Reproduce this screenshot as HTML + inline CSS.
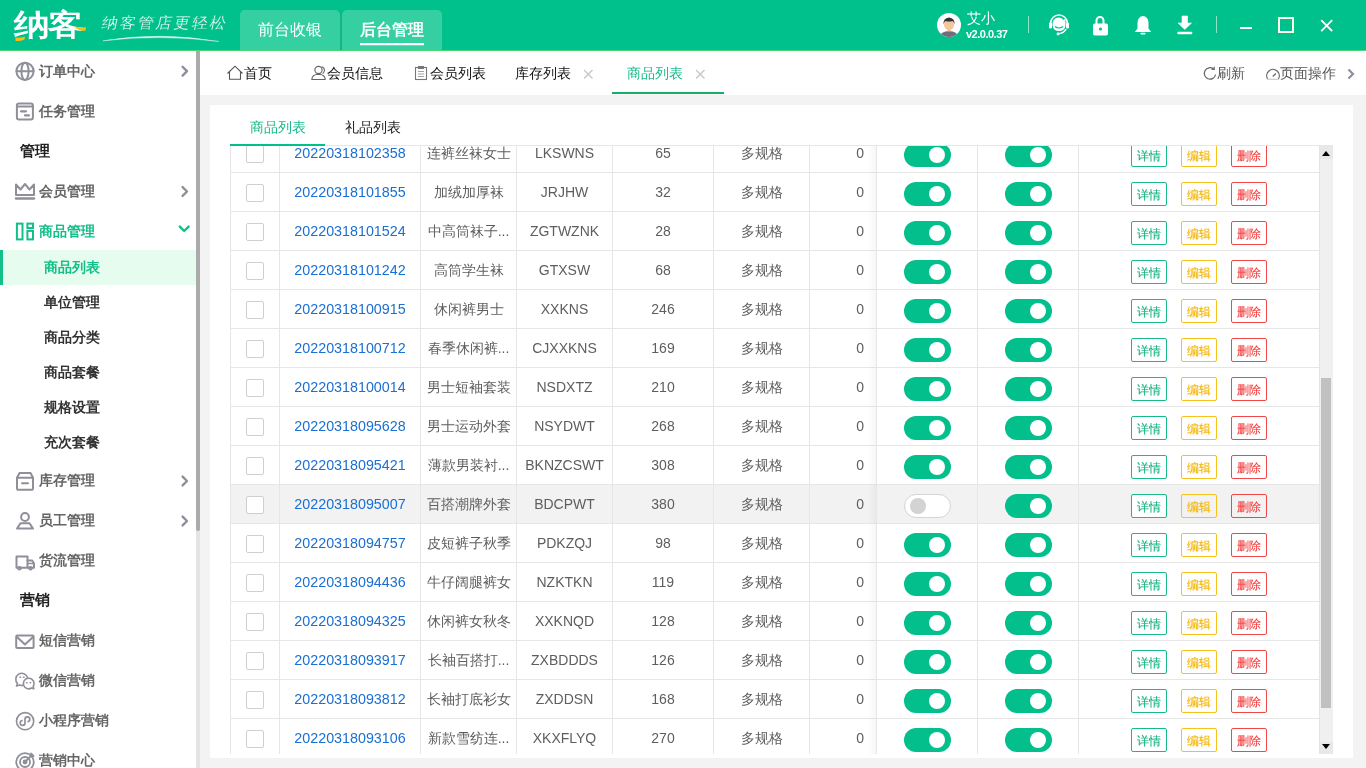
<!DOCTYPE html>
<html><head><meta charset="utf-8">
<style>
*{margin:0;padding:0;box-sizing:border-box}
html,body{width:1366px;height:768px;overflow:hidden;background:#f3f3f3;will-change:transform;font-family:"Liberation Sans",sans-serif;position:relative}
.a{position:absolute}
#hdr{position:absolute;left:0;top:0;width:1366px;height:51px;background:#00c18b;border-bottom:1px solid #4ad77a}
#logo{position:absolute;left:14px;top:9px;font-size:36px;font-weight:bold;color:#fff;letter-spacing:-1px;line-height:40px;transform:scale(0.98,0.82);transform-origin:0 0}
#slogan{position:absolute;left:102px;top:12px;font-size:16px;color:#fff;line-height:22px;letter-spacing:2px;transform:skewX(-12deg) scaleY(0.95);font-weight:300;-webkit-text-stroke:0.22px #02bf8b}
.htab{position:absolute;top:10px;height:40px;width:100px;background:#35d0a2;border-radius:5px 5px 0 0;color:#fff;font-size:16px;line-height:40px;text-align:center}
#side{position:absolute;left:0;top:51px;width:196px;height:717px;background:#fff;overflow:hidden}
#sscroll{position:absolute;left:196px;top:51px;width:4px;height:717px;background:#e4e4e4}
#sthumb{position:absolute;left:196px;top:51px;width:4px;height:480px;background:#ababab;border-radius:0 0 2px 2px}
#tabbar{position:absolute;left:200px;top:51px;width:1166px;height:44px;background:#fff}
#card{position:absolute;left:210px;top:105px;width:1143px;height:653px;background:#fff}
.tb{position:absolute;top:0;height:44px;line-height:44px;font-size:14px;color:#111}
#tbl{position:absolute;left:230px;top:145px;width:1103px;height:609px;overflow:hidden;background:#fff;border-top:1px solid #e6e6e6}
.row{position:absolute;left:0;width:1089px;height:39px;border-bottom:1px solid #e6e6e6;border-left:1px solid #e6e6e6;background:#fff}
.row.hov{background:#f2f2f2}
.c{position:absolute;top:0;height:38px;line-height:38px;text-align:center;font-size:14px;color:#5e5e5e;border-right:1px solid #e6e6e6;white-space:nowrap;overflow:hidden}
.cb{left:0;width:49px}
.code{left:49px;width:141px;color:#1a6fd3;font-size:14.3px}
.nm{left:190px;width:96px}
.py{left:286px;width:96px}
.st{left:382px;width:101px}
.spec{left:483px;width:96px}
.z{left:579px;width:80px;text-align:right;padding-right:26px;border-right:none}
.chk{position:absolute;left:15px;top:11px;width:18px;height:18px;border:1px solid #cfcfcf;border-radius:2px;background:#fff}
#fx{position:absolute;left:646px;top:0;width:443px;height:609px}
#fxsh{position:absolute;left:-8px;top:0;width:8px;height:609px;background:linear-gradient(to right,rgba(0,0,0,0),rgba(0,0,0,0.035))}
.frow{position:absolute;left:0;width:443px;height:39px;border-bottom:1px solid #e6e6e6;border-left:1px solid #e6e6e6;background:#fff}
.frow.hov{background:#f2f2f2}
.f1,.f2,.f3{position:absolute;top:0;height:38px;border-right:1px solid #e6e6e6}
.f1{left:0;width:101px}
.f2{left:101px;width:101px}
.f3{left:202px;width:241px;border-right:none}
.tg{position:absolute;left:27px;top:9px;width:47px;height:24px;border-radius:12px}
.tg.on{background:#02bf8b}
.tg.on:after{content:"";position:absolute;right:6px;top:4px;width:16px;height:16px;border-radius:50%;background:#fff}
.tg.off{background:#fff;border:1px solid #d4d4d4}
.tg.off:after{content:"";position:absolute;left:5px;top:3px;width:16px;height:16px;border-radius:50%;background:#d3d3d3}
.bt{position:absolute;top:9px;width:36px;height:24px;border:1px solid;border-radius:2px;font-weight:normal;font-size:12px;line-height:23px;padding-top:1px;text-align:center;-webkit-text-stroke:0.12px currentColor}
.bt.g{left:52px;color:#12b17f;border-color:#19b98a;background:#fff}
.bt.y{left:102px;color:#f5b400;border-color:#f8c21c}
.bt.r{left:152px;color:#f43a3a;border-color:#f04848}
#sb{position:absolute;left:1089px;top:0;width:14px;height:609px;background:#f0f0f0;border-left:1px solid #e4e4e4}
#sbbt1{position:absolute;left:0;top:0;width:13px;height:13px;background:#e8e8e8}
#sbbt2{position:absolute;left:0;top:596px;width:13px;height:13px;background:#e8e8e8}
#sbup{position:absolute;left:2px;top:5px;width:0;height:0;border-left:4px solid transparent;border-right:4px solid transparent;border-bottom:5px solid #000}
#thumb{position:absolute;left:1px;top:232px;width:10px;height:330px;background:#c1c1c1}
#sbdn{position:absolute;left:2px;top:598px;width:0;height:0;border-left:4px solid transparent;border-right:4px solid transparent;border-top:5px solid #000}
.si{position:absolute;left:39px;height:40px;line-height:40px;font-size:14px;font-weight:bold;color:#666;white-space:nowrap}
.si.act{color:#12bf88}
.sh{position:absolute;left:20px;height:40px;line-height:40px;font-size:15px;font-weight:bold;color:#222}
.ss{position:absolute;left:44px;height:35px;line-height:35px;font-size:14px;font-weight:bold;color:#333}
.sact{position:absolute;left:0;top:199px;width:196px;height:35px;background:#e6fcee;border-left:3px solid #12bf88}
</style></head><body>
<div id="hdr">
 <div id="logo">纳客</div>
 <svg class="a" style="left:0;top:0" width="240" height="50" viewBox="0 0 240 50">
  <path d="M15.5 37.5Q20 38.5 25 36.5L24.5 39.5Q20 41.5 15.5 41Z" fill="#fbbf14"/>
  <path d="M74.5 26Q80 28.5 86 27L85.5 30.5Q80 31.5 75.5 28Z" fill="#fbbf14"/>
  <path d="M103 40.8Q160 31.5 219 41.5Q160 34 103 40.8Z" fill="#fff" stroke="#fff" stroke-width="0.4" opacity="0.9"/>
 </svg>
 <div id="slogan">纳客管店更轻松</div>
 <div class="htab" style="left:240px">前台收银</div>
 <div class="htab" style="left:342px;font-weight:bold">后台管理<i style="position:absolute;left:18px;top:33px;width:64px;height:2px;background:#fff;box-shadow:0 0.5px 0 rgba(255,255,255,0.5)"></i></div>
 <i class="a" style="left:340px;top:12px;width:2px;height:38px;background:#16b384"></i>
 <svg class="a" style="left:936px;top:12px" width="26" height="26" viewBox="0 0 26 26">
  <defs><clipPath id="av"><circle cx="13" cy="13" r="12"/></clipPath></defs>
  <circle cx="13" cy="13" r="12" fill="#fff"/>
  <g clip-path="url(#av)">
   <path d="M3 26Q4 19.5 13 19Q22 19.5 23 26Z" fill="#6f6f7b"/>
   <rect x="11.3" y="15.5" width="3.4" height="4" fill="#efb88e"/>
   <ellipse cx="13" cy="12.5" rx="5" ry="5.6" fill="#f5c59c"/>
   <path d="M7.6 12.5Q7 6 13 5.5Q19 6 18.4 12.5Q18 9.5 16.5 9Q13 10 9.5 9Q8 9.5 7.6 12.5Z" fill="#333"/>
  </g>
 </svg>
 <div class="a" style="left:967px;top:9px;font-size:14px;line-height:18px;color:#fff">艾小</div>
 <div class="a" style="left:966px;top:28px;font-size:11px;line-height:13px;color:#fff;font-weight:bold;letter-spacing:-0.5px">v2.0.0.37</div>
 <i class="a" style="left:1028px;top:16px;width:1px;height:17px;background:#8fe3c6"></i>
 <i class="a" style="left:1216px;top:16px;width:1px;height:17px;background:#8fe3c6"></i>
 <svg class="a" style="left:1040px;top:8px" width="170" height="34" viewBox="1040 8 170 34">
  <!-- headset -->
  <g fill="none" stroke="#fff" stroke-width="1.6">
   <path d="M1050.5 25.5V23.5A8.5 8.5 0 0 1 1067.5 23.5V25.5"/>
   <path d="M1066 29Q1064 33.5 1058 33.8"/>
  </g>
  <rect x="1049" y="22.5" width="3" height="6" rx="1.2" fill="#fff"/>
  <rect x="1066" y="22.5" width="3" height="6" rx="1.2" fill="#fff"/>
  <path d="M1052.5 25Q1052.5 18 1058 17.5Q1062 17.5 1063.5 20L1065.5 18.5L1065.5 25Q1065 31 1059 31Q1053 31 1052.5 25Z" fill="#fff"/>
  <path d="M1055 26.5Q1059 29.5 1063 26.5" fill="none" stroke="#02bf8b" stroke-width="1.2"/>
  <circle cx="1058" cy="34" r="1.4" fill="#fff"/>
  <!-- lock -->
  <path d="M1096.5 24V20.5A3.5 3.5 0 0 1 1103.5 20.5V24" fill="none" stroke="#fff" stroke-width="2"/>
  <rect x="1093" y="23.5" width="15" height="12" rx="1.8" fill="#fff"/>
  <circle cx="1100.5" cy="29" r="1.6" fill="#02bf8b"/>
  <!-- bell -->
  <path d="M1143 16Q1148 16.5 1148.5 22.5V28.5L1151.2 32H1134.8L1137.5 28.5V22.5Q1138 16.5 1143 16Z" fill="#fff"/>
  <rect x="1140.5" y="32.8" width="5" height="1.8" rx="0.8" fill="#fff"/>
  <!-- download -->
  <path d="M1182 16H1187.5V23H1191.5L1184.75 29.5L1178 23H1182Z" fill="#fff" stroke="#fff" stroke-width="0.6" stroke-linejoin="round"/>
  <rect x="1177.3" y="31.8" width="15" height="2.5" rx="1" fill="#fff"/>
 </svg>
 <i class="a" style="left:1240px;top:27px;width:12px;height:2px;background:#fff"></i>
 <i class="a" style="left:1278px;top:17px;width:16px;height:16px;border:2px solid #fdfde6"></i>
 <svg class="a" style="left:1320px;top:19px" width="14" height="14" viewBox="0 0 14 14"><path d="M1.2 1.2L12.2 12.2M12.2 1.2L1.2 12.2" stroke="#fff" stroke-width="1.8"/></svg>
</div>
<div id="side">
<svg class="a" style="left:0;top:0" width="196" height="717" viewBox="0 51 196 717" fill="none" stroke="#8f8f9a" stroke-width="2" stroke-linecap="round" stroke-linejoin="round">
 <!-- globe -->
 <circle cx="25" cy="71.3" r="8.6"/>
 <ellipse cx="25" cy="71.3" rx="3.6" ry="8.6"/>
 <path d="M16.6 71.3H33.4"/>
 <!-- task -->
 <rect x="16.9" y="103.4" width="16" height="16" rx="2"/>
 <path d="M17 106.5H33"/>
 <path d="M21 111.3H26M25 115.3H29" stroke-width="2.2"/>
 <!-- crown -->
 <path d="M16 184.5V195H34V184.5L29.5 189.5L25 184L20.5 189.5Z"/>
 <path d="M16 198.5H34" stroke-width="2.4"/>
 <!-- goods green -->
 <g stroke="#12bf88" stroke-linecap="butt" stroke-linejoin="miter">
 <rect x="16.9" y="223.6" width="5.6" height="15.8"/>
 <rect x="27.4" y="223.6" width="5.6" height="4.4"/>
 <rect x="27.4" y="230.9" width="5.6" height="8.5"/>
 </g>
 <path d="M179.8 226.6L184.2 231L188.6 226.6" stroke="#12bf88" stroke-width="2.4"/>
 <!-- chevrons -->
 <g stroke-width="2.4">
 <path d="M182.6 66.8L187 71.2L182.6 75.6"/>
 <path d="M182.6 187.1L187 191.5L182.6 195.9"/>
 <path d="M182.6 476.6L187 481L182.6 485.4"/>
 <path d="M182.6 516.6L187 521L182.6 525.4"/>
 </g>
 <!-- warehouse -->
 <path d="M17 477.8H33V488.6a1.2 1.2 0 0 1 -1.2 1.2H18.2a1.2 1.2 0 0 1 -1.2 -1.2Z"/>
 <path d="M17 477.8L19.5 473H30.5L33 477.8"/>
 <path d="M22 483.3H28"/>
 <!-- person -->
 <circle cx="25" cy="517" r="3.9"/>
 <path d="M17 528.6L20.5 523.2H29.5L33 528.6Z"/>
 <!-- truck -->
 <path d="M16.5 567V556.5H27.5V567"/>
 <path d="M27.5 560.5H32.2L34 563.5V567.8H16.5"/>
 <path d="M28 563.5H34" stroke-width="1.6"/>
 <circle cx="19.5" cy="568.3" r="1.3" fill="#fff"/>
 <circle cx="30.5" cy="568.3" r="1.3" fill="#fff"/>
 <!-- envelope -->
 <rect x="16.2" y="635.6" width="17.4" height="12.3" rx="1"/>
 <path d="M17 637L25 644.5L33 637"/>
 <!-- wechat -->
 <path d="M27.5 677.5A6 6 0 1 0 17.5 683.5L16.5 686L19.5 685A6 6 0 0 0 22.8 685.4" stroke-width="1.6"/>
 <path d="M34 683.5A5.3 5.3 0 1 0 31.5 688L33.8 688.8L33.2 686.5A5.3 5.3 0 0 0 34 683.5Z" stroke-width="1.6"/>
 <path d="M20 677.2h.6M23.5 677.2h.6M26.5 682.8h.6M30 682.8h.6" stroke-width="1.4"/>
 <!-- mini program -->
 <circle cx="25.1" cy="721.2" r="8.6" stroke-width="1.6"/>
 <path d="M22.6 720.5A2.4 2.4 0 1 0 25 722.9V719.2A2.4 2.4 0 1 1 27.4 721.6" stroke-width="1.7" stroke-linecap="butt"/>
 <!-- target -->
 <circle cx="25" cy="762" r="8.8" stroke-width="1.8"/>
 <circle cx="25" cy="762" r="5" stroke-width="1.8"/>
 <circle cx="25" cy="762" r="1.4" fill="#8f8f9a"/>
 <path d="M25 762L32.5 754.5M31 753.5V756H33.5" stroke-width="1.8"/>
</svg>
<div class="si" style="top:0px">订单中心</div>
<div class="si" style="top:40px">任务管理</div>
<div class="sh" style="top:80px">管理</div>
<div class="si" style="top:120px">会员管理</div>
<div class="si act" style="top:160px">商品管理</div>
<div class="sact"></div>
<div class="ss" style="top:199px;color:#12bf88">商品列表</div>
<div class="ss" style="top:234px">单位管理</div>
<div class="ss" style="top:269px">商品分类</div>
<div class="ss" style="top:304px">商品套餐</div>
<div class="ss" style="top:339px">规格设置</div>
<div class="ss" style="top:374px">充次套餐</div>
<div class="si" style="top:409px">库存管理</div>
<div class="si" style="top:449px">员工管理</div>
<div class="si" style="top:489px">货流管理</div>
<div class="sh" style="top:529px">营销</div>
<div class="si" style="top:569px">短信营销</div>
<div class="si" style="top:609px">微信营销</div>
<div class="si" style="top:649px">小程序营销</div>
<div class="si" style="top:689px">营销中心</div>
</div>

<div id="sscroll"></div><div id="sthumb"></div>
<div id="tabbar">
 <div class="tb" style="left:44px">首页</div>
 <div class="tb" style="left:127px">会员信息</div>
 <div class="tb" style="left:230px">会员列表</div>
 <div class="tb" style="left:315px">库存列表</div>
 <div class="tb" style="left:427px;color:#19b98a">商品列表</div>
 <i class="a" style="left:412px;top:41px;width:112px;height:2px;background:#1aad66"></i>
 <div class="tb" style="left:1017px;color:#555">刷新</div>
 <div class="tb" style="left:1080px;color:#555">页面操作</div>
 <svg class="a" style="left:0;top:0" width="1166" height="44" viewBox="200 51 1166 44" fill="none" stroke-width="1.1">
  <path d="M227.5 73.5L235 66.2L242.5 73.5M229.5 71.5V79.2H240.5V71.5" stroke="#555"/>
  <circle cx="318.5" cy="70" r="3.6" stroke="#666"/>
  <path d="M311.8 79.5Q312 74.5 318.5 74.3Q325 74.5 325.2 79.5Z" stroke="#666"/>
  <path d="M321.5 66.8Q324.5 67.5 324.5 70.5Q324 73 322.5 73.5" stroke="#666"/>
  <rect x="415.5" y="67.5" width="11" height="12" stroke="#777"/>
  <path d="M418.5 66.5H423.5V68.5H418.5Z" stroke="#777"/>
  <path d="M418 71.5H424M418 74H424M418 76.5H424" stroke="#999" stroke-width="0.9"/>
  <path d="M584 70L592.5 78.5M592.5 70L584 78.5" stroke="#c4c4c4" stroke-width="1.2"/>
  <path d="M696 70L704.5 78.5M704.5 70L696 78.5" stroke="#c4c4c4" stroke-width="1.2"/>
  <path d="M1215.6 74.5A5.7 5.7 0 1 1 1213.6 69" stroke="#666" stroke-width="1.2"/>
  <path d="M1214.2 66.8V69.4H1211.6" stroke="#666" stroke-width="1.2"/>
  <path d="M1267.6 79A6.3 6.3 0 1 1 1278.4 79" stroke="#666" stroke-width="1.2"/>
  <path d="M1267 79.3H1279" stroke="#ccc" stroke-width="1.2"/>
  <path d="M1272.8 76.5L1275.8 73.5" stroke="#666" stroke-width="1.2"/>
  <path d="M1348.5 69.5L1353 74L1348.5 78.5" stroke="#8f8f9a" stroke-width="2.2"/>
 </svg>
</div>
<div id="card">
 <div class="a" style="left:40px;top:12px;font-size:14px;color:#19b98a;line-height:20px">商品列表</div>
 <div class="a" style="left:135px;top:12px;font-size:14px;color:#222;line-height:20px">礼品列表</div>
</div>
<div id="tbl">
<div class="row" style="top:-12px">
<div class="c cb"><i class="chk"></i></div>
<div class="c code">20220318102358</div>
<div class="c nm">连裤丝袜女士</div>
<div class="c py">LKSWNS</div>
<div class="c st">65</div>
<div class="c spec">多规格</div>
<div class="c z">0</div>
</div><div class="row" style="top:27px">
<div class="c cb"><i class="chk"></i></div>
<div class="c code">20220318101855</div>
<div class="c nm">加绒加厚袜</div>
<div class="c py">JRJHW</div>
<div class="c st">32</div>
<div class="c spec">多规格</div>
<div class="c z">0</div>
</div><div class="row" style="top:66px">
<div class="c cb"><i class="chk"></i></div>
<div class="c code">20220318101524</div>
<div class="c nm">中高筒袜子...</div>
<div class="c py">ZGTWZNK</div>
<div class="c st">28</div>
<div class="c spec">多规格</div>
<div class="c z">0</div>
</div><div class="row" style="top:105px">
<div class="c cb"><i class="chk"></i></div>
<div class="c code">20220318101242</div>
<div class="c nm">高筒学生袜</div>
<div class="c py">GTXSW</div>
<div class="c st">68</div>
<div class="c spec">多规格</div>
<div class="c z">0</div>
</div><div class="row" style="top:144px">
<div class="c cb"><i class="chk"></i></div>
<div class="c code">20220318100915</div>
<div class="c nm">休闲裤男士</div>
<div class="c py">XXKNS</div>
<div class="c st">246</div>
<div class="c spec">多规格</div>
<div class="c z">0</div>
</div><div class="row" style="top:183px">
<div class="c cb"><i class="chk"></i></div>
<div class="c code">20220318100712</div>
<div class="c nm">春季休闲裤...</div>
<div class="c py">CJXXKNS</div>
<div class="c st">169</div>
<div class="c spec">多规格</div>
<div class="c z">0</div>
</div><div class="row" style="top:222px">
<div class="c cb"><i class="chk"></i></div>
<div class="c code">20220318100014</div>
<div class="c nm">男士短袖套装</div>
<div class="c py">NSDXTZ</div>
<div class="c st">210</div>
<div class="c spec">多规格</div>
<div class="c z">0</div>
</div><div class="row" style="top:261px">
<div class="c cb"><i class="chk"></i></div>
<div class="c code">20220318095628</div>
<div class="c nm">男士运动外套</div>
<div class="c py">NSYDWT</div>
<div class="c st">268</div>
<div class="c spec">多规格</div>
<div class="c z">0</div>
</div><div class="row" style="top:300px">
<div class="c cb"><i class="chk"></i></div>
<div class="c code">20220318095421</div>
<div class="c nm">薄款男装衬...</div>
<div class="c py">BKNZCSWT</div>
<div class="c st">308</div>
<div class="c spec">多规格</div>
<div class="c z">0</div>
</div><div class="row hov" style="top:339px">
<div class="c cb"><i class="chk"></i></div>
<div class="c code">20220318095007</div>
<div class="c nm">百搭潮牌外套</div>
<div class="c py">BDCPWT</div>
<div class="c st">380</div>
<div class="c spec">多规格</div>
<div class="c z">0</div>
</div><div class="row" style="top:378px">
<div class="c cb"><i class="chk"></i></div>
<div class="c code">20220318094757</div>
<div class="c nm">皮短裤子秋季</div>
<div class="c py">PDKZQJ</div>
<div class="c st">98</div>
<div class="c spec">多规格</div>
<div class="c z">0</div>
</div><div class="row" style="top:417px">
<div class="c cb"><i class="chk"></i></div>
<div class="c code">20220318094436</div>
<div class="c nm">牛仔阔腿裤女</div>
<div class="c py">NZKTKN</div>
<div class="c st">119</div>
<div class="c spec">多规格</div>
<div class="c z">0</div>
</div><div class="row" style="top:456px">
<div class="c cb"><i class="chk"></i></div>
<div class="c code">20220318094325</div>
<div class="c nm">休闲裤女秋冬</div>
<div class="c py">XXKNQD</div>
<div class="c st">128</div>
<div class="c spec">多规格</div>
<div class="c z">0</div>
</div><div class="row" style="top:495px">
<div class="c cb"><i class="chk"></i></div>
<div class="c code">20220318093917</div>
<div class="c nm">长袖百搭打...</div>
<div class="c py">ZXBDDDS</div>
<div class="c st">126</div>
<div class="c spec">多规格</div>
<div class="c z">0</div>
</div><div class="row" style="top:534px">
<div class="c cb"><i class="chk"></i></div>
<div class="c code">20220318093812</div>
<div class="c nm">长袖打底衫女</div>
<div class="c py">ZXDDSN</div>
<div class="c st">168</div>
<div class="c spec">多规格</div>
<div class="c z">0</div>
</div><div class="row" style="top:573px">
<div class="c cb"><i class="chk"></i></div>
<div class="c code">20220318093106</div>
<div class="c nm">新款雪纺连...</div>
<div class="c py">XKXFLYQ</div>
<div class="c st">270</div>
<div class="c spec">多规格</div>
<div class="c z">0</div>
</div>
<div id="fx"><div id="fxsh"></div><div class="frow" style="top:-12px">
<div class="f1"><i class="tg on"></i></div>
<div class="f2"><i class="tg on"></i></div>
<div class="f3"><b class="bt g">详情</b><b class="bt y">编辑</b><b class="bt r">删除</b></div>
</div><div class="frow" style="top:27px">
<div class="f1"><i class="tg on"></i></div>
<div class="f2"><i class="tg on"></i></div>
<div class="f3"><b class="bt g">详情</b><b class="bt y">编辑</b><b class="bt r">删除</b></div>
</div><div class="frow" style="top:66px">
<div class="f1"><i class="tg on"></i></div>
<div class="f2"><i class="tg on"></i></div>
<div class="f3"><b class="bt g">详情</b><b class="bt y">编辑</b><b class="bt r">删除</b></div>
</div><div class="frow" style="top:105px">
<div class="f1"><i class="tg on"></i></div>
<div class="f2"><i class="tg on"></i></div>
<div class="f3"><b class="bt g">详情</b><b class="bt y">编辑</b><b class="bt r">删除</b></div>
</div><div class="frow" style="top:144px">
<div class="f1"><i class="tg on"></i></div>
<div class="f2"><i class="tg on"></i></div>
<div class="f3"><b class="bt g">详情</b><b class="bt y">编辑</b><b class="bt r">删除</b></div>
</div><div class="frow" style="top:183px">
<div class="f1"><i class="tg on"></i></div>
<div class="f2"><i class="tg on"></i></div>
<div class="f3"><b class="bt g">详情</b><b class="bt y">编辑</b><b class="bt r">删除</b></div>
</div><div class="frow" style="top:222px">
<div class="f1"><i class="tg on"></i></div>
<div class="f2"><i class="tg on"></i></div>
<div class="f3"><b class="bt g">详情</b><b class="bt y">编辑</b><b class="bt r">删除</b></div>
</div><div class="frow" style="top:261px">
<div class="f1"><i class="tg on"></i></div>
<div class="f2"><i class="tg on"></i></div>
<div class="f3"><b class="bt g">详情</b><b class="bt y">编辑</b><b class="bt r">删除</b></div>
</div><div class="frow" style="top:300px">
<div class="f1"><i class="tg on"></i></div>
<div class="f2"><i class="tg on"></i></div>
<div class="f3"><b class="bt g">详情</b><b class="bt y">编辑</b><b class="bt r">删除</b></div>
</div><div class="frow hov" style="top:339px">
<div class="f1"><i class="tg off"></i></div>
<div class="f2"><i class="tg on"></i></div>
<div class="f3"><b class="bt g">详情</b><b class="bt y">编辑</b><b class="bt r">删除</b></div>
</div><div class="frow" style="top:378px">
<div class="f1"><i class="tg on"></i></div>
<div class="f2"><i class="tg on"></i></div>
<div class="f3"><b class="bt g">详情</b><b class="bt y">编辑</b><b class="bt r">删除</b></div>
</div><div class="frow" style="top:417px">
<div class="f1"><i class="tg on"></i></div>
<div class="f2"><i class="tg on"></i></div>
<div class="f3"><b class="bt g">详情</b><b class="bt y">编辑</b><b class="bt r">删除</b></div>
</div><div class="frow" style="top:456px">
<div class="f1"><i class="tg on"></i></div>
<div class="f2"><i class="tg on"></i></div>
<div class="f3"><b class="bt g">详情</b><b class="bt y">编辑</b><b class="bt r">删除</b></div>
</div><div class="frow" style="top:495px">
<div class="f1"><i class="tg on"></i></div>
<div class="f2"><i class="tg on"></i></div>
<div class="f3"><b class="bt g">详情</b><b class="bt y">编辑</b><b class="bt r">删除</b></div>
</div><div class="frow" style="top:534px">
<div class="f1"><i class="tg on"></i></div>
<div class="f2"><i class="tg on"></i></div>
<div class="f3"><b class="bt g">详情</b><b class="bt y">编辑</b><b class="bt r">删除</b></div>
</div><div class="frow" style="top:573px">
<div class="f1"><i class="tg on"></i></div>
<div class="f2"><i class="tg on"></i></div>
<div class="f3"><b class="bt g">详情</b><b class="bt y">编辑</b><b class="bt r">删除</b></div>
</div></div>
<div id="sb"><div id="sbbt1"></div><div id="sbbt2"></div><div id="sbup"></div><div id="thumb"></div><div id="sbdn"></div></div>
</div>
<i class="a" style="left:230px;top:144px;width:95px;height:2px;background:#02bf8b;z-index:5"></i>
</body></html>
